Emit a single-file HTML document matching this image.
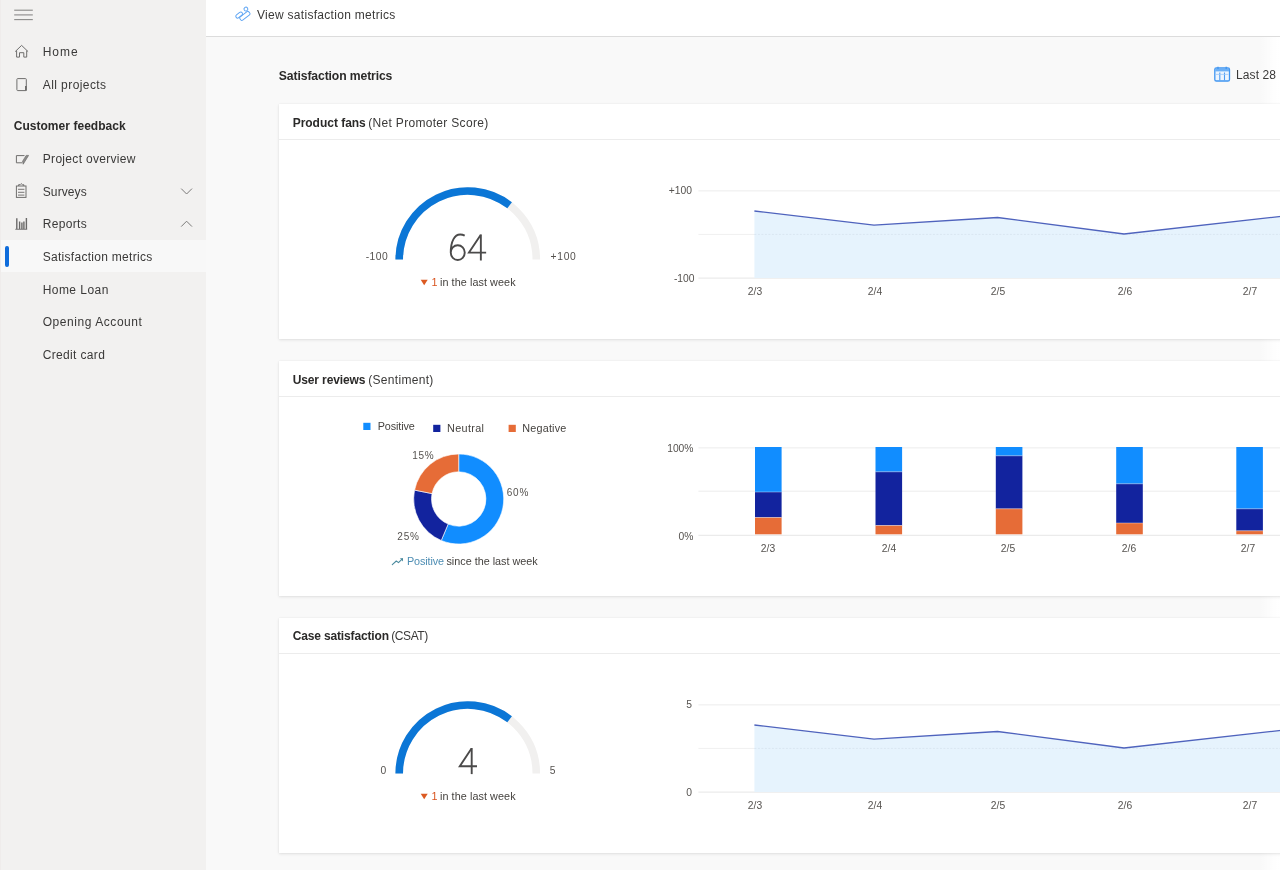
<!DOCTYPE html>
<html>
<head>
<meta charset="utf-8">
<title>Satisfaction metrics</title>
<style>
*{box-sizing:border-box;margin:0;padding:0}
html,body{width:1280px;height:870px;overflow:hidden;background:#f9f9f9;font-family:"Liberation Sans",sans-serif;color:#323130}
#side{position:absolute;left:0;top:0;width:206px;height:870px;background:#f2f1f0}
#top{position:absolute;left:206px;top:0;width:1074px;height:37px;background:#fff;border-bottom:1px solid #dcdcdc}
.t{position:absolute;white-space:nowrap;line-height:1;color:#3a3938;filter:blur(.35px)}
.b{font-weight:bold;color:#2b2a29}
#sel{position:absolute;left:0;top:240px;width:206px;height:32px;background:#f8f8f8}
#selbar{position:absolute;left:5.4px;top:245.6px;width:3.8px;height:21.6px;background:#0f6cdb;border-radius:1.9px}
.card{position:absolute;left:279px;width:1010px;height:235px;background:#fff;box-shadow:0 1px 3px rgba(0,0,0,.10),0 0 1px rgba(0,0,0,.08)}
.card .hd{position:absolute;left:0;top:0;width:100%;height:36px;border-bottom:1px solid #ececec}
.ax{color:#55524f}
.sm{color:#45423f}
.or{color:#d9531e}
.bl{color:#4d8db3}
#fade{position:absolute;left:1260px;top:37px;width:20px;height:833px;background:linear-gradient(to right,rgba(255,255,255,0),rgba(255,255,255,.9) 75%,#fff)}
#edge{position:absolute;left:0;top:0;width:1px;height:870px;background:#efeceb}
svg{position:absolute;left:0;top:0;overflow:visible;filter:blur(.35px)}
</style>
</head>
<body>
<div id="side"></div>
<div id="top"></div>
<div id="fade"></div>
<div id="sel"></div>
<div id="selbar"></div>
<div class="card" id="c1" style="top:104px"><div class="hd"></div></div>
<div class="card" id="c2" style="top:361px"><div class="hd"></div></div>
<div class="card" id="c3" style="top:618px"><div class="hd"></div></div>
<div class="t nav" id="n1" style="left:42.78px;top:45.84px;font-size:12px;letter-spacing:0.94px">Home</div>
<div class="t nav" id="n2" style="left:42.78px;top:78.84px;font-size:12px;letter-spacing:0.42px">All projects</div>
<div class="t b" id="n3" style="left:13.68px;top:119.84px;font-size:12px;letter-spacing:0.04px">Customer feedback</div>
<div class="t nav" id="n4" style="left:42.78px;top:152.84px;font-size:12px;letter-spacing:0.31px">Project overview</div>
<div class="t nav" id="n5" style="left:42.78px;top:185.84px;font-size:12px;letter-spacing:0.1px">Surveys</div>
<div class="t nav" id="n6" style="left:42.78px;top:217.84px;font-size:12px;letter-spacing:0.32px">Reports</div>
<div class="t nav" id="n7" style="left:42.68px;top:250.84px;font-size:12px;letter-spacing:0.29px">Satisfaction metrics</div>
<div class="t nav" id="n8" style="left:42.68px;top:283.84px;font-size:12px;letter-spacing:0.45px">Home Loan</div>
<div class="t nav" id="n9" style="left:42.68px;top:315.84px;font-size:12px;letter-spacing:0.56px">Opening Account</div>
<div class="t nav" id="n10" style="left:42.68px;top:348.84px;font-size:12px;letter-spacing:0.35px">Credit card</div>
<div class="t nav" id="tb" style="left:256.88px;top:8.84px;font-size:12px;letter-spacing:0.3px">View satisfaction metrics</div>
<div class="t b" id="h1" style="left:278.87px;top:69.67px;font-size:12.2px;letter-spacing:-0.12px">Satisfaction metrics</div>
<div class="t nav" id="last" style="left:1236.08px;top:68.84px;font-size:12px;letter-spacing:0.08px">Last 28 days</div>
<div class="t b" id="ct1a" style="left:292.68px;top:116.84px;font-size:12px;letter-spacing:-0.02px">Product fans</div>
<div class="t nav" id="ct1b" style="left:368.28px;top:116.84px;font-size:12px;letter-spacing:0.31px">(Net Promoter Score)</div>
<div class="t b" id="ct2a" style="left:292.68px;top:373.84px;font-size:12px;letter-spacing:-0.12px">User reviews</div>
<div class="t nav" id="ct2b" style="left:368.28px;top:373.84px;font-size:12px;letter-spacing:0.3px">(Sentiment)</div>
<div class="t b" id="ct3a" style="left:292.68px;top:629.84px;font-size:12px;letter-spacing:-0.15px">Case satisfaction</div>
<div class="t nav" id="ct3b" style="left:391.28px;top:629.84px;font-size:12px;letter-spacing:-0.43px">(CSAT)</div>
<div class="t ax" id="gm100" style="left:365.63px;top:252.28px;font-size:10.3px;letter-spacing:0.46px">-100</div>
<div class="t ax" id="gp100" style="left:550.48px;top:252.28px;font-size:10.3px;letter-spacing:0.71px">+100</div>
<div class="t sm or" id="gw1a" style="left:431.55px;top:276.86px;font-size:10.8px;letter-spacing:0px">1</div>
<div class="t sm" id="gw1b" style="left:439.95px;top:276.86px;font-size:10.8px;letter-spacing:0.08px">in the last week</div>
<div class="t ax" id="g0" style="left:380.38px;top:766.28px;font-size:10.3px;letter-spacing:0px">0</div>
<div class="t ax" id="g5" style="left:549.68px;top:766.28px;font-size:10.3px;letter-spacing:0px">5</div>
<div class="t sm or" id="gw2a" style="left:431.55px;top:790.86px;font-size:10.8px;letter-spacing:0px">1</div>
<div class="t sm" id="gw2b" style="left:439.95px;top:790.86px;font-size:10.8px;letter-spacing:0.08px">in the last week</div>
<div class="t sm" id="lg1" style="left:377.65px;top:420.86px;font-size:10.8px;letter-spacing:-0.1px">Positive</div>
<div class="t sm" id="lg2" style="left:447.05px;top:422.86px;font-size:10.8px;letter-spacing:0.35px">Neutral</div>
<div class="t sm" id="lg3" style="left:522.35px;top:422.86px;font-size:10.8px;letter-spacing:0.18px">Negative</div>
<div class="t ax" id="d15" style="left:412.30px;top:450.54px;font-size:10px;letter-spacing:0.64px">15%</div>
<div class="t ax" id="d60" style="left:506.70px;top:487.54px;font-size:10px;letter-spacing:0.84px">60%</div>
<div class="t ax" id="d25" style="left:397.30px;top:531.53px;font-size:10px;letter-spacing:0.84px">25%</div>
<div class="t sm bl" id="tra" style="left:406.95px;top:555.86px;font-size:10.8px;letter-spacing:-0.1px">Positive</div>
<div class="t sm" id="trb" style="left:446.45px;top:555.86px;font-size:10.8px;letter-spacing:-0.0px">since the last week</div>
<svg id="gfx" width="1280" height="870" viewBox="0 0 1280 870">
<path d="M399.20 259.60A68.55 68.55 0 0 1 536.30 259.60" fill="none" stroke="#f1f0ef" stroke-width="7.6"/>
<path d="M399.20 259.60A68.55 68.55 0 0 1 509.62 205.33" fill="none" stroke="#0b76d6" stroke-width="7.6"/>
<path d="M399.20 773.60A68.55 68.55 0 0 1 536.30 773.60" fill="none" stroke="#f1f0ef" stroke-width="7.6"/>
<path d="M399.20 773.60A68.55 68.55 0 0 1 509.62 719.33" fill="none" stroke="#0b76d6" stroke-width="7.6"/>
<line x1="698.4" x2="1290" y1="190.9" y2="190.9" stroke="#ececec" stroke-width="1"/>
<line x1="698.4" x2="1290" y1="234.4" y2="234.4" stroke="#f0f0f0" stroke-width="1"/>
<line x1="698.4" x2="1290" y1="278.1" y2="278.1" stroke="#e6e6e6" stroke-width="1"/>
<polygon points="754.4,211.0 874.0,225.2 997.5,217.5 1124.0,234.0 1290.0,215.4 1290,278.1 754.4,278.1" fill="#e6f3fd"/>
<line x1="754.4" x2="1290" y1="234.4" y2="234.4" stroke="#d9e6f1" stroke-width="1" stroke-dasharray="2 1.5"/>
<polyline points="754.4,211.0 874.0,225.2 997.5,217.5 1124.0,234.0 1290.0,215.4" fill="none" stroke="#4f63bd" stroke-width="1.3" stroke-linejoin="round"/>
<line x1="698.4" x2="1290" y1="704.9" y2="704.9" stroke="#ececec" stroke-width="1"/>
<line x1="698.4" x2="1290" y1="748.4" y2="748.4" stroke="#f0f0f0" stroke-width="1"/>
<line x1="698.4" x2="1290" y1="792.1" y2="792.1" stroke="#e6e6e6" stroke-width="1"/>
<polygon points="754.4,725.0 874.0,739.2 997.5,731.5 1124.0,748.0 1290.0,729.4 1290,792.1 754.4,792.1" fill="#e6f3fd"/>
<line x1="754.4" x2="1290" y1="748.4" y2="748.4" stroke="#d9e6f1" stroke-width="1" stroke-dasharray="2 1.5"/>
<polyline points="754.4,725.0 874.0,739.2 997.5,731.5 1124.0,748.0 1290.0,729.4" fill="none" stroke="#4f63bd" stroke-width="1.3" stroke-linejoin="round"/>
<line x1="698.4" x2="1290" y1="447.9" y2="447.9" stroke="#ececec" stroke-width="1"/>
<line x1="698.4" x2="1290" y1="491.2" y2="491.2" stroke="#ececec" stroke-width="1"/>
<line x1="698.4" x2="1290" y1="535.3" y2="535.3" stroke="#e6e6e6" stroke-width="1"/>
<rect x="755" y="447" width="26.6" height="45.0" fill="#118dff"/>
<rect x="755" y="492" width="26.6" height="25.5" fill="#12239e"/>
<rect x="755" y="517.5" width="26.6" height="16.8" fill="#e66c37"/>
<line x1="755" x2="781.6" y1="492" y2="492" stroke="#fff" stroke-opacity=".55" stroke-width="0.7"/>
<line x1="755" x2="781.6" y1="517.5" y2="517.5" stroke="#fff" stroke-opacity=".55" stroke-width="0.7"/>
<rect x="875.5" y="447" width="26.6" height="24.8" fill="#118dff"/>
<rect x="875.5" y="471.8" width="26.6" height="53.7" fill="#12239e"/>
<rect x="875.5" y="525.5" width="26.6" height="8.8" fill="#e66c37"/>
<line x1="875.5" x2="902.1" y1="471.8" y2="471.8" stroke="#fff" stroke-opacity=".55" stroke-width="0.7"/>
<line x1="875.5" x2="902.1" y1="525.5" y2="525.5" stroke="#fff" stroke-opacity=".55" stroke-width="0.7"/>
<rect x="995.8" y="447" width="26.6" height="8.8" fill="#118dff"/>
<rect x="995.8" y="455.8" width="26.6" height="53.0" fill="#12239e"/>
<rect x="995.8" y="508.8" width="26.6" height="25.5" fill="#e66c37"/>
<line x1="995.8" x2="1022.4" y1="455.8" y2="455.8" stroke="#fff" stroke-opacity=".55" stroke-width="0.7"/>
<line x1="995.8" x2="1022.4" y1="508.8" y2="508.8" stroke="#fff" stroke-opacity=".55" stroke-width="0.7"/>
<rect x="1116.2" y="447" width="26.6" height="36.8" fill="#118dff"/>
<rect x="1116.2" y="483.8" width="26.6" height="39.2" fill="#12239e"/>
<rect x="1116.2" y="523" width="26.6" height="11.3" fill="#e66c37"/>
<line x1="1116.2" x2="1142.8" y1="483.8" y2="483.8" stroke="#fff" stroke-opacity=".55" stroke-width="0.7"/>
<line x1="1116.2" x2="1142.8" y1="523" y2="523" stroke="#fff" stroke-opacity=".55" stroke-width="0.7"/>
<rect x="1236.3" y="447" width="26.6" height="61.8" fill="#118dff"/>
<rect x="1236.3" y="508.8" width="26.6" height="22.0" fill="#12239e"/>
<rect x="1236.3" y="530.8" width="26.6" height="3.5" fill="#e66c37"/>
<line x1="1236.3" x2="1262.8999999999999" y1="508.8" y2="508.8" stroke="#fff" stroke-opacity=".55" stroke-width="0.7"/>
<line x1="1236.3" x2="1262.8999999999999" y1="530.8" y2="530.8" stroke="#fff" stroke-opacity=".55" stroke-width="0.7"/>
<path d="M458.70 454.00A45 45 0 1 1 441.26 540.48L448.16 524.07A27.2 27.2 0 1 0 458.70 471.80Z" fill="#118dff" stroke="#fff" stroke-width="0.6"/>
<path d="M441.26 540.48A45 45 0 0 1 414.59 490.11L432.04 493.62A27.2 27.2 0 0 0 448.16 524.07Z" fill="#12239e" stroke="#fff" stroke-width="0.6"/>
<path d="M414.59 490.11A45 45 0 0 1 458.70 454.00L458.70 471.80A27.2 27.2 0 0 0 432.04 493.62Z" fill="#e66c37" stroke="#fff" stroke-width="0.6"/>
<text x="692" y="194.4" text-anchor="end" font-family="Liberation Sans, sans-serif" font-size="10.3" fill="#55524f" >+100</text>
<text x="694.5" y="282.4" text-anchor="end" font-family="Liberation Sans, sans-serif" font-size="10.3" fill="#55524f" >-100</text>
<text x="755" y="295" text-anchor="middle" font-family="Liberation Sans, sans-serif" font-size="10.3" fill="#55524f" >2/3</text>
<text x="875" y="295" text-anchor="middle" font-family="Liberation Sans, sans-serif" font-size="10.3" fill="#55524f" >2/4</text>
<text x="998" y="295" text-anchor="middle" font-family="Liberation Sans, sans-serif" font-size="10.3" fill="#55524f" >2/5</text>
<text x="1125" y="295" text-anchor="middle" font-family="Liberation Sans, sans-serif" font-size="10.3" fill="#55524f" >2/6</text>
<text x="1250" y="295" text-anchor="middle" font-family="Liberation Sans, sans-serif" font-size="10.3" fill="#55524f" >2/7</text>
<text x="692" y="708.4" text-anchor="end" font-family="Liberation Sans, sans-serif" font-size="10.3" fill="#55524f" >5</text>
<text x="692" y="796.4" text-anchor="end" font-family="Liberation Sans, sans-serif" font-size="10.3" fill="#55524f" >0</text>
<text x="755" y="809" text-anchor="middle" font-family="Liberation Sans, sans-serif" font-size="10.3" fill="#55524f" >2/3</text>
<text x="875" y="809" text-anchor="middle" font-family="Liberation Sans, sans-serif" font-size="10.3" fill="#55524f" >2/4</text>
<text x="998" y="809" text-anchor="middle" font-family="Liberation Sans, sans-serif" font-size="10.3" fill="#55524f" >2/5</text>
<text x="1125" y="809" text-anchor="middle" font-family="Liberation Sans, sans-serif" font-size="10.3" fill="#55524f" >2/6</text>
<text x="1250" y="809" text-anchor="middle" font-family="Liberation Sans, sans-serif" font-size="10.3" fill="#55524f" >2/7</text>
<text x="693.5" y="452" text-anchor="end" font-family="Liberation Sans, sans-serif" font-size="10.3" fill="#55524f" >100%</text>
<text x="693.5" y="540" text-anchor="end" font-family="Liberation Sans, sans-serif" font-size="10.3" fill="#55524f" >0%</text>
<text x="768" y="552" text-anchor="middle" font-family="Liberation Sans, sans-serif" font-size="10.3" fill="#55524f" >2/3</text>
<text x="889" y="552" text-anchor="middle" font-family="Liberation Sans, sans-serif" font-size="10.3" fill="#55524f" >2/4</text>
<text x="1008" y="552" text-anchor="middle" font-family="Liberation Sans, sans-serif" font-size="10.3" fill="#55524f" >2/5</text>
<text x="1129" y="552" text-anchor="middle" font-family="Liberation Sans, sans-serif" font-size="10.3" fill="#55524f" >2/6</text>
<text x="1248" y="552" text-anchor="middle" font-family="Liberation Sans, sans-serif" font-size="10.3" fill="#55524f" >2/7</text>
<rect x="363.3" y="422.8" width="7.2" height="7.2" fill="#118dff"/>
<rect x="433.2" y="424.8" width="7.2" height="7.2" fill="#12239e"/>
<rect x="508.6" y="424.8" width="7.2" height="7.2" fill="#e66c37"/>
<path d="M420.7 279.8H427.7L424.2 285.2Z" fill="#dc5a22"/>
<path d="M420.7 793.8H427.7L424.2 799.2Z" fill="#dc5a22"/>
<path d="M392.3 564.6L396.3 561L398.5 562.6L402.3 558.9" fill="none" stroke="#4a8a9e" stroke-width="1.1" stroke-linecap="round" stroke-linejoin="round"/><path d="M399.9 558.3H403V561.4Z" fill="#4a8a9e"/>
<line x1="14.2" x2="32.8" y1="10.2" y2="10.2" stroke="#8a8988" stroke-width="1.1"/>
<line x1="14.2" x2="32.8" y1="14.9" y2="14.9" stroke="#8a8988" stroke-width="1.1"/>
<line x1="14.2" x2="32.8" y1="19.6" y2="19.6" stroke="#8a8988" stroke-width="1.1"/>
<path d="M15.2 51.6L21.6 45.4L28.1 51.6M16.6 50.6V57.1H19.5V52.7H23.8V57.1H26.7V50.6" fill="none" stroke="#6f6e6d" stroke-width="1" stroke-linejoin="round"/>
<rect x="16.9" y="78.6" width="9.4" height="12" rx="0.8" fill="none" stroke="#6f6e6d" stroke-width="1"/><line x1="25.9" x2="25.9" y1="86" y2="90.8" stroke="#6f6e6d" stroke-width="1.8"/>
<path d="M24.5 155.6H16.4V162.8H22.2" fill="none" stroke="#6f6e6d" stroke-width="1"/><path d="M28.6 155.4L23.2 164.2L22.6 161.2L26.2 155.4Z" fill="#8c8b8a" stroke="#6f6e6d" stroke-width="0.7" stroke-linejoin="round"/>
<rect x="16.4" y="186" width="9.6" height="11.4" fill="none" stroke="#6f6e6d" stroke-width="1"/><path d="M18.6 186V184.7H20.1L21.2 183.6L22.3 184.7H23.8V186" fill="none" stroke="#6f6e6d" stroke-width="1"/><path d="M18 189.3H24.4M18 192.3H24.4M18 195.1H24.4" stroke="#777675" stroke-width="1" fill="none"/>
<path d="M15.3 229.3H27.2" stroke="#7a7978" stroke-width="1" fill="none"/><path d="M16.8 218.2V229M19.6 221.4V229M21.9 222.6V229M23.9 221.4V229M26.4 218V229" stroke="#6a6968" stroke-width="1.4" fill="none"/>
<path d="M181.2 188.6L186.6 194L192 188.6" fill="none" stroke="#7a7978" stroke-width="1"/>
<path d="M181.2 226.6L186.6 221.2L192 226.6" fill="none" stroke="#7a7978" stroke-width="1"/>
<g transform="translate(242.8 14) rotate(-38)" fill="none" stroke="#5fa5f3" stroke-width="1"><rect x="-5.2" y="0.7" width="11.3" height="4.1" rx="1.3"/><rect x="-7.3" y="-3.2" width="7.6" height="3.6" rx="1.8"/><circle cx="5.5" cy="-2" r="1.9"/></g>
<g><rect x="1214.8" y="68" width="14.7" height="13" rx="1.6" fill="#edf5fe" stroke="#3f95f1" stroke-width="1.3"/><rect x="1215.2" y="68.4" width="13.9" height="3" fill="#6cb0f6"/><path d="M1219.8 72.4V80.2M1224.5 72.4V80.2" stroke="#4b9cf3" stroke-width="1.1"/><path d="M1218 66.8V69M1226.2 66.8V69" stroke="#3f95f1" stroke-width="1.3"/><path d="M1216 74.4H1228.4" stroke="#9cc8f8" stroke-width="0.8"/></g>
<path d="M464.7 235.7C463.3 234.95 461.8 234.55 460.2 234.55C454.5 234.55 450.75 241.5 450.75 252.6A7 7.4 0 1 0 464.75 252.6A7 7.4 0 1 0 450.75 252.6" fill="none" stroke="#4b4a4a" stroke-width="1.9" stroke-linejoin="miter" stroke-linecap="butt"/>
<path d="M480.85 234.40V260.5" fill="none" stroke="#4b4a4a" stroke-width="1.9" stroke-linejoin="miter" stroke-linecap="butt"/><path d="M480.65 234.90L468.95 252.60H486.15" fill="none" stroke="#4b4a4a" stroke-width="1.9" stroke-linejoin="miter" stroke-linecap="butt"/>
<path d="M471.7 748.00V774.1" fill="none" stroke="#4b4a4a" stroke-width="1.9" stroke-linejoin="miter" stroke-linecap="butt"/><path d="M471.50 748.50L459.80 766.20H477.00" fill="none" stroke="#4b4a4a" stroke-width="1.9" stroke-linejoin="miter" stroke-linecap="butt"/>
</svg>
<div id="edge"></div>
</body>
</html>
